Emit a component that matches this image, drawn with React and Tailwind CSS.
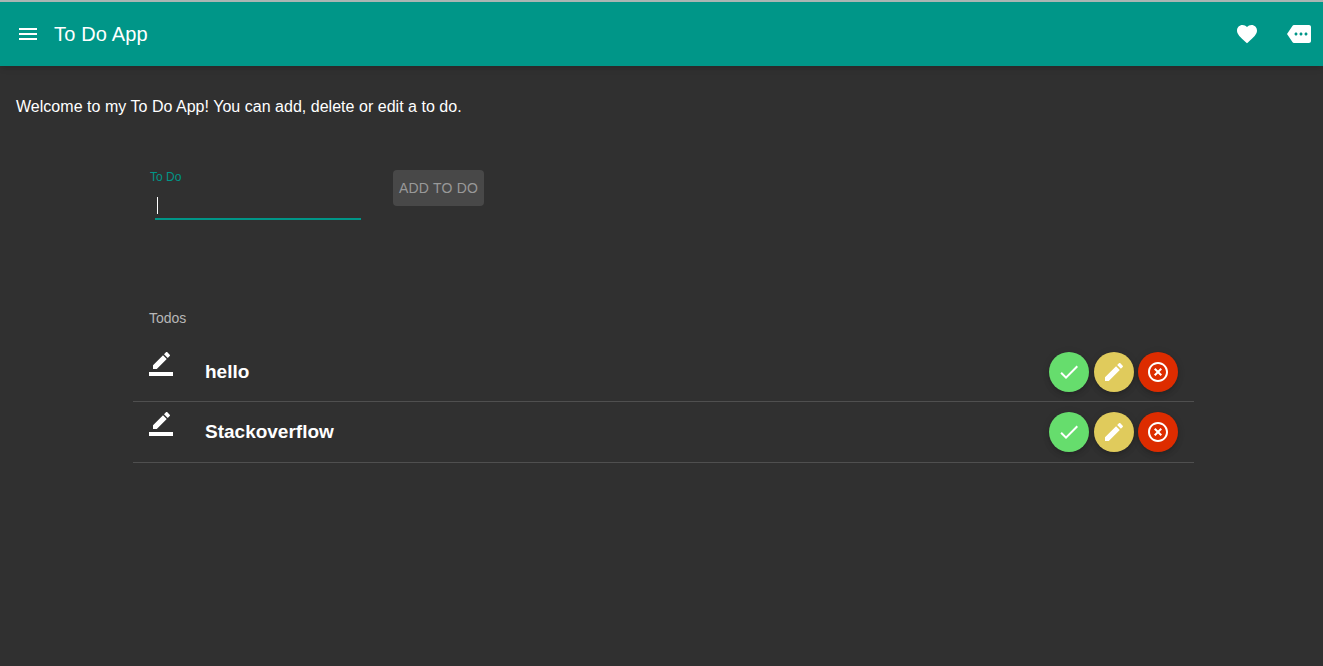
const PATHS = {
  menu: "M3 18h18v-2H3v2zm0-5h18v-2H3v2zm0-7v2h18V6H3z",
  heart:
    "M12 21.35l-1.45-1.32C5.4 15.36 2 12.28 2 8.5 2 5.42 4.42 3 7.5 3c1.74 0 3.41.81 4.5 2.09C13.09 3.81 14.76 3 16.5 3 19.58 3 22 5.42 22 8.5c0 3.78-3.4 6.86-8.55 11.54L12 21.35z",
  more:
    "M22 3H7c-.69 0-1.23.35-1.59.88L0 12l5.41 8.11c.36.53.9.89 1.59.89h15c1.1 0 2-.9 2-2V5c0-1.1-.9-2-2-2zM9 13.5c-.83 0-1.5-.67-1.5-1.5s.67-1.5 1.5-1.5 1.5.67 1.5 1.5-.67 1.5-1.5 1.5zm5 0c-.83 0-1.5-.67-1.5-1.5s.67-1.5 1.5-1.5 1.5.67 1.5 1.5-.67 1.5-1.5 1.5zm5 0c-.83 0-1.5-.67-1.5-1.5s.67-1.5 1.5-1.5 1.5.67 1.5 1.5-.67 1.5-1.5 1.5z",
  borderColor:
    "M17.75 7L14 3.25l-10 10V17h3.75l10-10zm2.96-2.96c.39-.39.39-1.02 0-1.41L18.37.29c-.39-.39-1.02-.39-1.41 0L15 2.25 18.75 6l1.96-1.96zM0 20h24v4H0z",
  done: "M9 16.2L4.8 12l-1.4 1.4L9 19 21 7l-1.4-1.4L9 16.2z",
  edit:
    "M3 17.25V21h3.75L17.81 9.94l-3.75-3.75L3 17.25zM20.71 7.04c.39-.39.39-1.02 0-1.41l-2.34-2.34c-.39-.39-1.02-.39-1.41 0l-1.83 1.83 3.75 3.75 1.83-1.83z",
  close:
    "M14.59 8L12 10.59 9.41 8 8 9.41 10.59 12 8 14.59 9.41 16 12 13.41 14.59 16 16 14.59 13.41 12 16 9.41 14.59 8zM12 2C6.47 2 2 6.47 2 12s4.47 10 10 10 10-4.47 10-10S17.53 2 12 2zm0 18c-4.41 0-8-3.59-8-8s3.59-8 8-8 8 3.59 8 8-3.59 8-8 8z",
};

const Icon = ({ name }) => (
  <svg className="h-6 w-6 shrink-0 fill-white" viewBox="0 0 24 24">
    <path d={PATHS[name]} />
  </svg>
);

const Fab = ({ name, className }) => (
  <button
    type="button"
    className={`flex h-10 w-10 items-center justify-center rounded-full shadow-[0_2px_4px_-1px_rgba(0,0,0,0.14),0_4px_6px_0_rgba(0,0,0,0.08),0_1px_10px_0_rgba(0,0,0,0.07)] ${className}`}
  >
    <Icon name={name} />
  </button>
);

const TodoRow = ({ text }) => (
  <li className="flex h-[60px] border-b border-[#4f4f4f] pl-4 pr-4 last:h-[61px]">
    <div className="w-14 shrink-0 pt-[10px]">
      <Icon name="borderColor" />
    </div>
    <div className="flex-1 pt-[18px] text-[19px] leading-[24px] font-bold text-white">
      {text}
    </div>
    <div className="flex gap-[4.5px] pt-[10px]">
      <Fab name="done" className="bg-[#66dd6d]" />
      <Fab name="edit" className="bg-[#e0cb5c]" />
      <Fab name="close" className="bg-[#dd2c00]" />
    </div>
  </li>
);

export default function App() {
  return (
    <div className="h-[666px] overflow-hidden bg-[#303030] font-['Liberation_Sans',Arial,sans-serif] text-white">
      {/* App bar */}
      <header className="flex h-[66px] items-center border-t-2 border-[#a9b5b3] bg-[#009688] pl-4 pr-3 shadow-md">
        <Icon name="menu" />
        <h1 className="ml-[14px] flex-1 text-[20px] leading-8 tracking-[0.16px]">To Do App</h1>
        <div className="flex items-center gap-4">
          <div className="flex h-6 w-6 items-center justify-center">
            <Icon name="heart" />
          </div>
          <div className="ml-[12px]">
            <Icon name="more" />
          </div>
        </div>
      </header>

      <p className="pl-4 pt-[31px] text-base leading-5 tracking-[0.025px]">
        Welcome to my To Do App! You can add, delete or edit a to do.
      </p>

      <div className="ml-[133px] w-[1061px]">
        {/* Add form */}
        <form className="flex pt-[53px]">
          <div className="w-[228px] pl-[17px]">
            <label className="block text-xs leading-[14px] text-[#009688]">To Do</label>
            <div className="ml-[5px] mt-[6px] h-[30px] w-[206px] border-b-2 border-[#009688] pl-[2px] pt-[7px]">
              <span className="block h-[17px] w-px bg-white" />
            </div>
          </div>
          <button
            type="button"
            className="ml-[32px] h-9 w-[91px] rounded bg-[#484848] text-sm tracking-[0.2px] text-[#999999]"
          >
            ADD TO DO
          </button>
        </form>

        {/* List */}
        <h2 className="pl-4 pt-[88px] text-sm leading-[20px] font-normal text-[#b7b7b7]">
          Todos
        </h2>
        <ul className="pt-[14px]">
          <TodoRow text="hello" />
          <TodoRow text="Stackoverflow" />
        </ul>
      </div>
    </div>
  );
}
